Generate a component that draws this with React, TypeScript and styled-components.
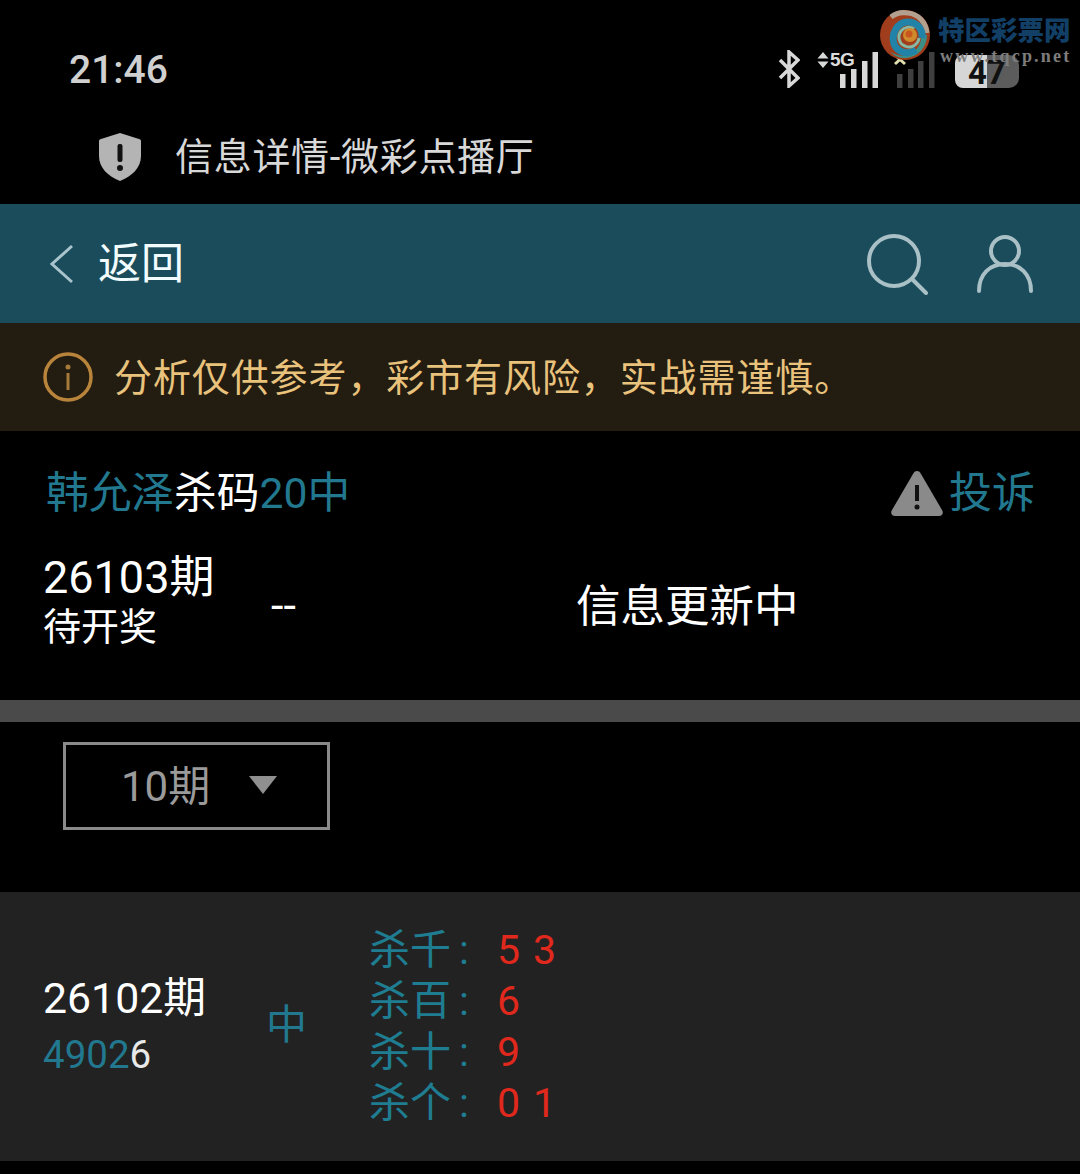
import React from 'react';
import styled, { createGlobalStyle } from 'styled-components';

const GlobalStyle = createGlobalStyle`
  html, body {
    margin: 0;
    padding: 0;
    background: #000;
    font-family: Roboto, "Noto Sans CJK SC", sans-serif;
  }
`;

const Page = styled.div`
  position: relative;
  width: 1080px;
  height: 1174px;
  overflow: hidden;
  background: #000;
  color: #fff;
`;

const StatusBar = styled.div`
  height: 115px;
  padding: 48px 61px 0 69px;
  box-sizing: border-box;
  display: flex;
  justify-content: space-between;
  align-items: flex-start;
`;

const Clock = styled.div`
  font-size: 39px;
  line-height: 44px;
  font-weight: 500;
  color: #d0d0d0;
`;

const StatusIcons = styled.div`
  display: flex;
  align-items: flex-start;
  padding-top: 4px;
`;

const Bluetooth = styled.svg`
  width: 22px;
  height: 38px;
  margin-top: -2px;
  margin-right: 17px;
`;

const NetGroup = styled.div`
  position: relative;
  width: 61px;
  height: 36px;
  display: flex;
  justify-content: flex-end;
  margin-right: 15px;
`;

const NetArrows = styled.svg`
  position: absolute;
  left: 0;
  top: 0;
  width: 12px;
  height: 16px;
`;

const NetLabel = styled.span`
  position: absolute;
  left: 13px;
  top: -3px;
  font-family: "Liberation Sans", sans-serif;
  font-size: 19px;
  line-height: 22px;
  font-weight: 700;
  letter-spacing: -0.6px;
  color: #dcdcdc;
`;

const BatteryBox = styled.div`
  width: 64px;
  height: 33px;
  margin-left: 20px;
  margin-top: 3px;
  border-radius: 8px 10px 10px 8px;
  background: linear-gradient(90deg, #d6d6d6 0 50%, #5c5c5c 50% 100%);
  color: #111;
  font-size: 33px;
  font-weight: 700;
  line-height: 36px;
  text-align: center;
`;

const Watermark = styled.div`
  position: absolute;
  top: 9px;
  left: 879px;
  display: flex;
  align-items: flex-start;
`;

const WatermarkText = styled.div`
  margin-left: 7px;
  padding-top: 7px;
`;

const WatermarkTitle = styled.div`
  font-size: 26.5px;
  line-height: 30px;
  font-weight: 900;
  color: #123f66;
  white-space: nowrap;
`;

const WatermarkUrl = styled.div`
  font-family: "Liberation Serif", serif;
  font-size: 18px;
  line-height: 20px;
  font-weight: 700;
  letter-spacing: 2.2px;
  color: #7d7d7d;
  margin-left: 2px;
  white-space: nowrap;
`;

const TitleRow = styled.div`
  height: 89px;
  padding: 0 0 12px 96px;
  box-sizing: border-box;
  display: flex;
  align-items: center;
  gap: 31px;
  font-size: 38px;
  letter-spacing: 0.7px;
  color: #d8d8d8;
`;

const ShieldIcon = styled.svg`
  width: 48px;
  height: 50px;
  margin-top: 6px;
`;

const Header = styled.div`
  height: 119px;
  padding: 0 46px 0 48px;
  box-sizing: border-box;
  background: #1a4c5b;
  display: flex;
  align-items: center;
  justify-content: space-between;
`;

const Back = styled.div`
  display: flex;
  align-items: center;
  gap: 22px;
  font-size: 43px;
  line-height: 56px;
  color: #f2fbfd;
`;

const HeaderIcons = styled.div`
  display: flex;
  align-items: center;
  gap: 48px;
`;

const Notice = styled.div`
  height: 108px;
  padding: 0 0 5px 42px;
  box-sizing: border-box;
  background: #221c11;
  display: flex;
  align-items: center;
  gap: 20px;
  font-size: 38px;
  letter-spacing: 0.9px;
  color: #e9c27c;
`;

const NoticeIcon = styled.svg`
  width: 52px;
  height: 52px;
  margin-top: 5px;
`;

const Info = styled.div`
  height: 269px;
  padding: 34px 45px 0 44px;
  box-sizing: border-box;
`;

const InfoHead = styled.div`
  display: flex;
  align-items: center;
  justify-content: space-between;
`;

const ExpertTitle = styled.div`
  font-size: 42.7px;
  line-height: 56px;
  margin-left: 2px;
  color: #fff;
`;

const Accent = styled.span`
  color: #21788f;
`;

const Complaint = styled.div`
  display: flex;
  align-items: center;
  gap: 5px;
  font-size: 43px;
  line-height: 56px;
  color: #21788f;
`;

const Current = styled.div`
  display: flex;
  align-items: center;
  margin-top: 32px;
`;

const IssueCol = styled.div`
  width: 228px;
  margin-left: -1px;
`;

const IssueNo = styled.div`
  font-size: 45px;
  line-height: 50px;
`;

const IssueState = styled.div`
  font-size: 38px;
  line-height: 44px;
  margin-top: 2px;
`;

const Dash = styled.div`
  width: 305px;
  font-size: 45px;
  margin-top: 8px;
`;

const Updating = styled.div`
  font-size: 44.5px;
  margin-top: 2px;
`;

const Divider = styled.div`
  height: 22px;
  background: #4a4a4a;
`;

const FilterBar = styled.div`
  height: 170px;
  padding: 20px 0 0 63px;
  box-sizing: border-box;
`;

const Select = styled.div`
  width: 267px;
  height: 88px;
  box-sizing: border-box;
  border: 3px solid #8a8a8a;
  padding: 0 0 8px 55px;
  display: flex;
  align-items: center;
  gap: 39px;
  font-size: 42px;
  color: #9a9a9a;
`;

const Arrow = styled.div`
  width: 0;
  height: 0;
  margin-top: 5px;
  border-left: 14px solid transparent;
  border-right: 14px solid transparent;
  border-top: 18px solid #8f8f8f;
`;

const ResultRow = styled.div`
  height: 269px;
  padding-left: 43px;
  box-sizing: border-box;
  background: #222222;
  display: flex;
  align-items: center;
`;

const ResultIssue = styled.div`
  width: 223px;
  margin-top: -4px;
`;

const ResultNo = styled.div`
  font-size: 42.8px;
  line-height: 50px;
`;

const ResultDraw = styled.div`
  font-size: 38.5px;
  line-height: 44px;
  margin-top: 10px;
  color: #21788f;
`;

const Last = styled.span`
  color: #e8e8e8;
`;

const Hit = styled.div`
  width: 103px;
  font-size: 41px;
  line-height: 56px;
  color: #21788f;
  margin-top: -3px;
`;

const KillList = styled.div`
  display: flex;
  flex-direction: column;
  margin-top: 1px;
`;

const KillLine = styled.div`
  display: flex;
  font-size: 41px;
  line-height: 51px;
  color: #1f7d92;
`;

const KillLabel = styled.span`
  width: 128px;
`;

const KillColon = styled.span`
  margin-left: 8px;
`;

const KillNums = styled.span`
  color: #e0281c;
  letter-spacing: 13px;
`;

const NOTICE_TEXT = '分析仅供参考\uFF0C彩市有风险\uFF0C实战需谨慎。';

const kills = [
  { label: '杀千', nums: '53' },
  { label: '杀百', nums: '6' },
  { label: '杀十', nums: '9' },
  { label: '杀个', nums: '01' },
];

const SignalBars = ({ color }: { color: string }) => (
  <svg width="38" height="36" viewBox="0 0 38 36">
    <rect x="0" y="22" width="5.5" height="14" fill={color} />
    <rect x="11" y="17" width="5.5" height="19" fill={color} />
    <rect x="22" y="9" width="5.5" height="27" fill={color} />
    <rect x="32.5" y="0" width="5.5" height="36" fill={color} />
  </svg>
);

const LollipopLogo = () => (
  <svg width="52" height="52" viewBox="0 0 52 52">
    <circle cx="26" cy="26" r="25" fill="#a03d1c" />
    <path d="M12 8c5-4 11-5 17-4 10 1 18 9 19 20" fill="none" stroke="#b3a08f" strokeWidth="5" />
    <path d="M48 26c0 12-9 22-21 23-7 0-12-2-15-6 8 5 16 5 22 0 6-4 9-11 8-18z" fill="#3a8f86" />
    <path d="M37 41c-8 5-18 3-22-6-3-10 3-22 14-22 9 0 15 7 14 16" fill="none" stroke="#2283a8" strokeWidth="7" />
    <path d="M40 29c-1 7-8 11-14 8-6-2-8-10-4-15 3-4 9-5 13-2" fill="none" stroke="#86b8a4" strokeWidth="3" />
    <circle cx="31" cy="26" r="7" fill="#d08a2c" />
    <circle cx="30" cy="25" r="3.5" fill="#c9561f" />
  </svg>
);

const App: React.FC = () => (
  <Page>
    <GlobalStyle />
    <StatusBar>
      <Clock>21:46</Clock>
      <StatusIcons>
        <Bluetooth viewBox="0 0 22 38">
          <path d="M2 10l18 18-9 8V2l9 8L2 28" fill="none" stroke="#d8d8d8" strokeWidth="3.5" />
        </Bluetooth>
        <NetGroup>
          <NetArrows viewBox="0 0 12 16">
            <path d="M6 0l5.5 6.5H.5zM6 16l5.5-6.5H.5z" fill="#d8d8d8" />
          </NetArrows>
          <NetLabel>5G</NetLabel>
          <SignalBars color="#d8d8d8" />
        </NetGroup>
        <svg width="42" height="36" viewBox="0 0 42 36">
          <g transform="translate(4 0)">
            <rect x="0" y="22" width="5.5" height="14" fill="#3f3f3f" />
            <rect x="11" y="17" width="5.5" height="19" fill="#3f3f3f" />
            <rect x="21" y="9" width="5.5" height="27" fill="#3f3f3f" />
            <rect x="32" y="0" width="5.5" height="36" fill="#3f3f3f" />
          </g>
          <path d="M2 3l10 9M12 3L2 12" stroke="#e2dfae" strokeWidth="3" />
        </svg>
        <BatteryBox>47</BatteryBox>
      </StatusIcons>
    </StatusBar>
    <Watermark>
      <LollipopLogo />
      <WatermarkText>
        <WatermarkTitle>特区彩票网</WatermarkTitle>
        <WatermarkUrl>www.tqcp.net</WatermarkUrl>
      </WatermarkText>
    </Watermark>
    <TitleRow>
      <ShieldIcon viewBox="0 0 48 50">
        <path d="M24 1l19 6c1 0 2 1 2 2v15c0 12-9 20-21 25C12 44 3 36 3 24V9c0-1 1-2 2-2z" fill="#b4b4b4" />
        <rect x="21.5" y="12" width="5" height="18" rx="2" fill="#111" />
        <circle cx="24" cy="36" r="3" fill="#111" />
      </ShieldIcon>
      信息详情-微彩点播厅
    </TitleRow>
    <Header>
      <Back>
        <svg width="28" height="42" viewBox="0 0 28 42">
          <path d="M24 3L4 21l20 18" fill="none" stroke="#a9c4cc" strokeWidth="3" />
        </svg>
        返回
      </Back>
      <HeaderIcons>
        <svg width="62" height="62" viewBox="0 0 62 62">
          <circle cx="28" cy="28" r="25" fill="none" stroke="#a9c0c6" strokeWidth="4" />
          <path d="M46 46l14 14" stroke="#a9c0c6" strokeWidth="4" strokeLinecap="round" />
        </svg>
        <svg width="58" height="60" viewBox="0 0 58 60">
          <circle cx="29" cy="17" r="14" fill="none" stroke="#a9c0c6" strokeWidth="4" />
          <path d="M3 57c0-17 11-27 26-27s26 10 26 27" fill="none" stroke="#a9c0c6" strokeWidth="4" strokeLinecap="round" />
        </svg>
      </HeaderIcons>
    </Header>
    <Notice>
      <NoticeIcon viewBox="0 0 52 52">
        <circle cx="26" cy="26" r="23" fill="none" stroke="#b8843c" strokeWidth="3.5" />
        <circle cx="26" cy="16" r="2.5" fill="#a67b3a" />
        <rect x="24.5" y="22" width="3" height="17" fill="#a67b3a" />
      </NoticeIcon>
      {NOTICE_TEXT}
    </Notice>
    <Info>
      <InfoHead>
        <ExpertTitle>
          <Accent>韩允泽</Accent>杀码<Accent>20中</Accent>
        </ExpertTitle>
        <Complaint>
          <svg width="54" height="46" viewBox="0 0 54 46">
            <path d="M27 1c2 0 3 1 4 3l21 36c2 3 0 6-3 6H5c-3 0-5-3-3-6L23 4c1-2 2-3 4-3z" fill="#8a8a8a" />
            <rect x="25" y="15" width="4" height="16" fill="#111" />
            <circle cx="27" cy="37" r="2.5" fill="#111" />
          </svg>
          投诉
        </Complaint>
      </InfoHead>
      <Current>
        <IssueCol>
          <IssueNo>26103期</IssueNo>
          <IssueState>待开奖</IssueState>
        </IssueCol>
        <Dash>--</Dash>
        <Updating>信息更新中</Updating>
      </Current>
    </Info>
    <Divider />
    <FilterBar>
      <Select>
        10期
        <Arrow />
      </Select>
    </FilterBar>
    <ResultRow>
      <ResultIssue>
        <ResultNo>26102期</ResultNo>
        <ResultDraw>
          4902<Last>6</Last>
        </ResultDraw>
      </ResultIssue>
      <Hit>中</Hit>
      <KillList>
        {kills.map((k) => (
          <KillLine key={k.label}>
            <KillLabel>
              {k.label}
              <KillColon>:</KillColon>
            </KillLabel>
            <KillNums>{k.nums}</KillNums>
          </KillLine>
        ))}
      </KillList>
    </ResultRow>
  </Page>
);

export default App;
